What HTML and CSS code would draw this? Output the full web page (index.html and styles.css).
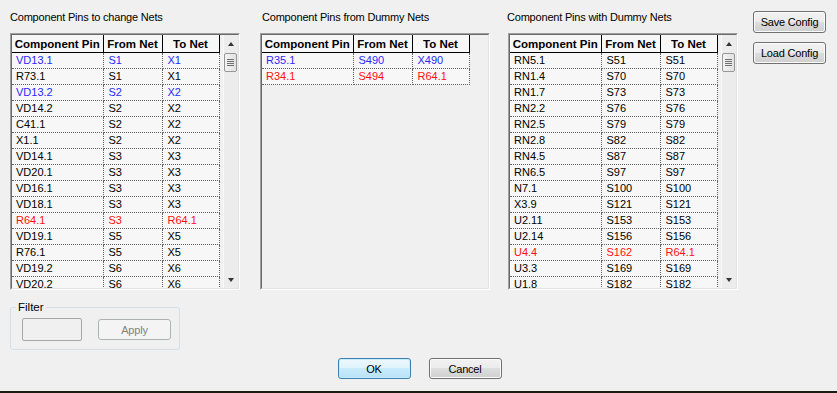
FILE: index.html
```html
<!DOCTYPE html>
<html lang="en">
<head>
  <meta charset="UTF-8" />
  <meta name="viewport" content="width=device-width, initial-scale=1.0">
  <title>Dummy Nets</title>
  <link rel="stylesheet" href="styles.css">
</head>
<body>

  <div class="top">
    <div class="panel">
      <div class="caption">Component Pins to change Nets</div>
      <div class="grid-box">
        <div class="grid-inner">
          <table class="pins">
            <colgroup><col class="c1"><col class="c2"><col class="c3"></colgroup>
            <thead>
              <tr><th>Component Pin</th><th>From Net</th><th>To Net</th></tr>
            </thead>
            <tbody>
              <tr class="blue"><td>VD13.1</td><td>S1</td><td>X1</td></tr>
              <tr><td>R73.1</td><td>S1</td><td>X1</td></tr>
              <tr class="blue"><td>VD13.2</td><td>S2</td><td>X2</td></tr>
              <tr><td>VD14.2</td><td>S2</td><td>X2</td></tr>
              <tr><td>C41.1</td><td>S2</td><td>X2</td></tr>
              <tr><td>X1.1</td><td>S2</td><td>X2</td></tr>
              <tr><td>VD14.1</td><td>S3</td><td>X3</td></tr>
              <tr><td>VD20.1</td><td>S3</td><td>X3</td></tr>
              <tr><td>VD16.1</td><td>S3</td><td>X3</td></tr>
              <tr><td>VD18.1</td><td>S3</td><td>X3</td></tr>
              <tr class="red"><td>R64.1</td><td>S3</td><td>R64.1</td></tr>
              <tr><td>VD19.1</td><td>S5</td><td>X5</td></tr>
              <tr><td>R76.1</td><td>S5</td><td>X5</td></tr>
              <tr><td>VD19.2</td><td>S6</td><td>X6</td></tr>
              <tr><td>VD20.2</td><td>S6</td><td>X6</td></tr>
            </tbody>
          </table>
          <div class="scrollbar">
            <div class="sb-btn"><span class="arrow-up"></span></div>
            <div class="sb-thumb"><span></span><span></span><span></span><span></span></div>
            <div class="sb-track"></div>
            <div class="sb-btn"><span class="arrow-down"></span></div>
          </div>
        </div>
      </div>
    </div>

    <div class="panel panel-mid">
      <div class="caption">Component Pins from Dummy Nets</div>
      <div class="grid-box">
        <div class="grid-inner">
          <table class="pins">
            <colgroup><col class="c1"><col class="c2"><col class="c3"></colgroup>
            <thead>
              <tr><th>Component Pin</th><th>From Net</th><th>To Net</th></tr>
            </thead>
            <tbody>
              <tr class="blue"><td>R35.1</td><td>S490</td><td>X490</td></tr>
              <tr class="red"><td>R34.1</td><td>S494</td><td>R64.1</td></tr>
            </tbody>
          </table>
        </div>
      </div>
    </div>

    <div class="panel panel-right">
      <div class="caption">Component Pins with Dummy Nets</div>
      <div class="grid-box">
        <div class="grid-inner">
          <table class="pins">
            <colgroup><col class="c1"><col class="c2"><col class="c3"></colgroup>
            <thead>
              <tr><th>Component Pin</th><th>From Net</th><th>To Net</th></tr>
            </thead>
            <tbody>
              <tr><td>RN5.1</td><td>S51</td><td>S51</td></tr>
              <tr><td>RN1.4</td><td>S70</td><td>S70</td></tr>
              <tr><td>RN1.7</td><td>S73</td><td>S73</td></tr>
              <tr><td>RN2.2</td><td>S76</td><td>S76</td></tr>
              <tr><td>RN2.5</td><td>S79</td><td>S79</td></tr>
              <tr><td>RN2.8</td><td>S82</td><td>S82</td></tr>
              <tr><td>RN4.5</td><td>S87</td><td>S87</td></tr>
              <tr><td>RN6.5</td><td>S97</td><td>S97</td></tr>
              <tr><td>N7.1</td><td>S100</td><td>S100</td></tr>
              <tr><td>X3.9</td><td>S121</td><td>S121</td></tr>
              <tr><td>U2.11</td><td>S153</td><td>S153</td></tr>
              <tr><td>U2.14</td><td>S156</td><td>S156</td></tr>
              <tr class="red"><td>U4.4</td><td>S162</td><td>R64.1</td></tr>
              <tr><td>U3.3</td><td>S169</td><td>S169</td></tr>
              <tr><td>U1.8</td><td>S182</td><td>S182</td></tr>
            </tbody>
          </table>
          <div class="scrollbar">
            <div class="sb-btn"><span class="arrow-up"></span></div>
            <div class="sb-thumb"><span></span><span></span><span></span><span></span></div>
            <div class="sb-track"></div>
            <div class="sb-btn"><span class="arrow-down"></span></div>
          </div>
        </div>
      </div>
    </div>

    <div class="side-buttons">
      <button class="btn">Save Config</button>
      <button class="btn">Load Config</button>
    </div>
  </div>

  <fieldset class="filter">
    <legend>Filter</legend>
    <div class="filter-row">
      <input type="text" class="filter-input" disabled>
      <button class="btn btn-apply" disabled>Apply</button>
    </div>
  </fieldset>

  <div class="actions">
    <button class="btn btn-default btn-wide">OK</button>
    <button class="btn btn-wide">Cancel</button>
  </div>

</body>
</html>
```

FILE: styles.css
```css
body {
  margin: 0;
  width: 837px;
  height: 393px;
  box-sizing: border-box;
  overflow: hidden;
  background: #f0f0f0;
  border-bottom: 2px solid #1d1a16;
  font-family: "Liberation Sans", Arial, sans-serif;
  font-size: 11px;
  color: #000;
}

.top {
  display: flex;
  padding-left: 10px;
}

.panel {
  width: 230px;
  margin-right: 20px;
}

.panel-mid {
  margin-right: 18px;
}

.panel-right {
  margin-right: 15px;
}

.caption {
  height: 22px;
  padding-top: 11px;
  line-height: 13px;
  letter-spacing: -0.2px;
  white-space: nowrap;
}

.panel-mid .caption {
  padding-left: 2px;
}

.panel-right .caption {
  margin-left: -1px;
}

/* sunken grid frame */
.grid-box {
  height: 257px;
  box-sizing: border-box;
  border: 1px solid;
  border-color: #a0a0a0 #ffffff #ffffff #a0a0a0;
}

.grid-inner {
  height: 100%;
  box-sizing: border-box;
  border: 1px solid;
  border-color: #696969 #e3e3e3 #e3e3e3 #696969;
  display: flex;
  overflow: hidden;
}

.pins {
  border-collapse: collapse;
  table-layout: fixed;
  width: 207px;
  margin-right: 3px;
  align-self: flex-start;
}

.pins .c1 { width: 91px; }
.pins .c2 { width: 59px; }
.pins .c3 { width: 57px; }

.pins th {
  height: 17px;
  padding: 0;
  font-size: 11.5px;
  font-weight: bold;
  text-align: center;
  background: #f7f7f7;
  border-right: 1px solid #000;
  border-bottom: 1px solid #000;
  white-space: nowrap;
  overflow: hidden;
}

.pins td {
  height: 15px;
  padding: 0 0 0 5px;
  line-height: 15px;
  background: #f7f7f7;
  border-right: 1px dotted #666;
  border-bottom: 1px dotted #666;
  white-space: nowrap;
  overflow: hidden;
}

.pins td:first-child {
  padding-left: 4px;
}

.pins tr.blue td { color: #2a2aff; }
.pins tr.red td { color: #ff1010; }

/* fake scrollbar */
.scrollbar {
  width: 16px;
  display: flex;
  flex-direction: column;
  background: #ececec;
  border-left: 1px solid #f8f8f8;
  box-sizing: border-box;
}

.sb-btn {
  height: 17px;
  display: flex;
  align-items: center;
  justify-content: center;
}

.arrow-up,
.arrow-down {
  width: 0;
  height: 0;
  border-left: 3.5px solid transparent;
  border-right: 3.5px solid transparent;
}

.arrow-up { border-bottom: 4px solid #333; }
.arrow-down { border-top: 4px solid #333; }

.sb-thumb {
  height: 19px;
  box-sizing: border-box;
  margin: 1px 1px 0 0;
  border: 1px solid #979797;
  border-radius: 2px;
  background: linear-gradient(to right, #f3f3f3, #e2e2e2);
  display: flex;
  flex-direction: column;
  align-items: center;
  justify-content: center;
  gap: 1px;
}

.sb-thumb span {
  width: 7px;
  height: 1px;
  background: #6f6f6f;
}

.sb-track {
  flex: 1;
}

/* buttons */
.side-buttons {
  display: flex;
  flex-direction: column;
  gap: 9px;
  padding-top: 11px;
}

.btn {
  width: 73px;
  height: 22px;
  padding: 0;
  font-family: "Liberation Sans", Arial, sans-serif;
  font-size: 11px;
  letter-spacing: -0.2px;
  color: #000;
  border: 1px solid #707070;
  border-radius: 3px;
  background: linear-gradient(#f2f2f2 0%, #ebebeb 50%, #dddddd 50%, #cfcfcf 100%);
  box-shadow: inset 0 0 0 1px #fcfcfc;
}

.btn-wide {
  height: 21px;
}

.btn-default {
  border-color: #3c7fb1;
  background: linear-gradient(#eef8fe 0%, #dff2fc 50%, #c9ebfc 50%, #b9e2f8 100%);
  box-shadow: inset 0 0 0 1px #c8ecfb;
}

.btn-apply {
  height: 21px;
  color: #838383;
  border-color: #adb2b5;
  background: #f4f4f4;
  box-shadow: none;
}

/* filter group */
.filter {
  width: 170px;
  box-sizing: border-box;
  margin: 11px 0 0 10px;
  padding: 4px 8px 8px 11px;
  border: 1px solid #d5dfe5;
  border-radius: 3px;
}

.filter legend {
  margin-left: -6px;
  padding: 0 2px;
  line-height: 13px;
  font-size: 11.5px;
}

.filter-row {
  display: flex;
  align-items: center;
  gap: 16px;
}

.filter-input {
  width: 60px;
  height: 23px;
  box-sizing: border-box;
  margin: 0;
  border: 1px solid #a6a6a6;
  border-radius: 2px;
  background: #f0f0f0;
}

.actions {
  display: flex;
  justify-content: center;
  gap: 18px;
  margin-top: 8px;
  padding-left: 2px;
}
```
